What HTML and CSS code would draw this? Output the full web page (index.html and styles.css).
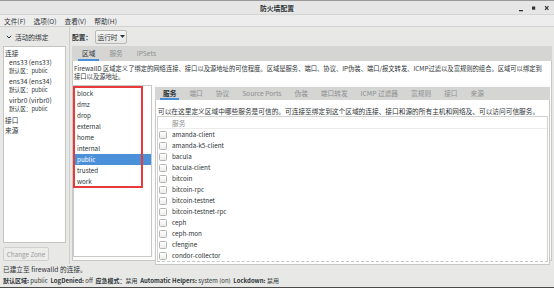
FILE: index.html
```html
<!DOCTYPE html>
<html lang="zh-CN">
<head>
<meta charset="utf-8">
<title>防火墙配置</title>
<link rel="stylesheet" href="styles.css">
</head>
<body>
<div class="window">
  <div class="titlebar">
    <span class="title">防火墙配置</span>
    <svg class="wbtns" width="40" height="10" viewBox="0 0 40 10">
      <rect x="8" y="7" width="4" height="1.3" fill="#2e3436"/>
      <rect x="21" y="3.5" width="3.2" height="3.2" fill="#2e3436"/>
      <path d="M34 3.2 L37.4 6.8 M37.4 3.2 L34 6.8" stroke="#2e3436" stroke-width="1.2"/>
    </svg>
  </div>
  <div class="menubar">
    <span>文件(F)</span><span>选项(O)</span><span>查看(V)</span><span>帮助(H)</span>
  </div>
  <div class="main">
    <div class="leftcol">
      <div class="lhead"><svg width="6" height="4" viewBox="0 0 6 4"><path d="M0.8 0.8 L3 3 L5.2 0.8" stroke="#2e3436" stroke-width="1" fill="none"/></svg><span>活动的绑定</span></div>
      <div class="lbox">
        <div class="sect">连接</div>
        <div class="conn"><div class="cname">ens33 (ens33)</div><div class="csub">默认区：public</div></div>
        <div class="conn"><div class="cname">ens34 (ens34)</div><div class="csub">默认区：public</div></div>
        <div class="conn"><div class="cname">virbr0 (virbr0)</div><div class="csub">默认区：public</div></div>
        <div class="sect">接口</div>
        <div class="sect">来源</div>
      </div>
      <div class="czbtn">Change Zone</div>
    </div>
    <div class="vsep"></div>
    <div class="rightcol">
      <div class="cfgrow"><span class="cfglabel">配置：</span><span class="dropdown">运行时<svg width="5" height="3" viewBox="0 0 5 3"><path d="M0 0 H5 L2.5 3 Z" fill="#2e3436"/></svg></span></div>
      <div class="nb">
        <div class="tabs outer-tabs">
          <span class="tab active">区域</span><span class="tab">服务</span><span class="tab">IPSets</span>
        </div>
        <div class="page">
          <div class="desc">FirewallD 区域定义了绑定的网络连接、接口以及源地址的可信程度。区域是服务、端口、协议、IP伪装、端口/报文转发、ICMP过滤以及富规则的组合。区域可以绑定到<br>接口以及源地址。</div>
          <div class="zonerow">
            <div class="zonelist">
              <div class="zone">block</div>
              <div class="zone">dmz</div>
              <div class="zone">drop</div>
              <div class="zone">external</div>
              <div class="zone">home</div>
              <div class="zone">internal</div>
              <div class="zone selected">public</div>
              <div class="zone">trusted</div>
              <div class="zone">work</div>
              <div class="annot"></div>
            </div>
            <div class="inb">
              <div class="tabs inner-tabs">
                <span class="tab active">服务</span><span class="tab">端口</span><span class="tab">协议</span><span class="tab">Source Ports</span><span class="tab">伪装</span><span class="tab">端口转发</span><span class="tab">ICMP 过滤器</span><span class="tab">富规则</span><span class="tab">接口</span><span class="tab">来源</span>
              </div>
              <div class="ipage">
                <div class="idesc">可以在这里定义区域中哪些服务是可信的。可连接至绑定到这个区域的连接、接口和源的所有主机和网络及、可以访问可信服务。</div>
                <div class="table">
                  <div class="thead">服务</div>
                  <div class="tbody">
                    <div class="row"><span class="cb"></span>amanda-client</div>
                    <div class="row"><span class="cb"></span>amanda-k5-client</div>
                    <div class="row"><span class="cb"></span>bacula</div>
                    <div class="row"><span class="cb"></span>bacula-client</div>
                    <div class="row"><span class="cb"></span>bitcoin</div>
                    <div class="row"><span class="cb"></span>bitcoin-rpc</div>
                    <div class="row"><span class="cb"></span>bitcoin-testnet</div>
                    <div class="row"><span class="cb"></span>bitcoin-testnet-rpc</div>
                    <div class="row"><span class="cb"></span>ceph</div>
                    <div class="row"><span class="cb"></span>ceph-mon</div>
                    <div class="row"><span class="cb"></span>cfengine</div>
                    <div class="row"><span class="cb"></span>condor-collector</div>
                  </div>
                </div>
              </div>
            </div>
          </div>
        </div>
      </div>
    </div>
  </div>
  <div class="status">
    <div class="sline">已建立至 firewalld 的连接。</div>
    <div class="sline small"><b>默认区域:</b> public&nbsp; <b>LogDenied:</b> off&nbsp; <b>应急模式：</b>禁用&nbsp; <b>Automatic Helpers:</b> system (on)&nbsp; <b>Lockdown:</b> 禁用</div>
  </div>
</div>
</body>
</html>
```
FILE: styles.css
```css
* { box-sizing: border-box; }
html, body { margin: 0; padding: 0; }
body {
  width: 554px;
  height: 288px;
  overflow: hidden;
  background: #e8e8e7;
  font-family: "Noto Sans CJK SC", "Noto Sans", sans-serif;
  font-size: 6.7px;
  color: #2e3436;
}
.window {
  width: 554px;
  height: 288px;
  border-top: 1px solid #9a9a9a;
  border-bottom: 1px solid #4a4a4a;
  display: flex;
  flex-direction: column;
  background: #e8e8e7;
}
.titlebar {
  position: relative;
  height: 14px;
  display: flex;
  align-items: center;
  justify-content: center;
  background: #e6e6e6;
  border-bottom: 1px solid #d4d4d4;
}
.title { font-weight: bold; font-size: 6.8px; }
.wbtns { position: absolute; right: 3px; top: 2px; }
.menubar {
  height: 12px;
  display: flex;
  align-items: center;
  gap: 8px;
  padding-left: 4px;
  background: #ededed;
  border-bottom: 1px solid #d2d2d2;
}
.main {
  height: 237px;
  display: flex;
}
.leftcol {
  width: 69px;
  display: flex;
  flex-direction: column;
}
.lhead {
  height: 19px;
  display: flex;
  align-items: center;
  gap: 3px;
  padding-left: 6px;
}
.lbox {
  margin-left: 3px;
  width: 63px;
  height: 197px;
  background: #fff;
  border: 1px solid #c4c4c2;
  padding-top: 1px;
  padding-left: 1px;
}
.sect { line-height: 10px; }
.conn { padding-left: 4px; margin-bottom: 2px; }
.cname { line-height: 8.5px; }
.csub { line-height: 8.5px; font-size: 5.6px; }
.czbtn {
  margin: 4px 0 0 3px;
  width: 46px;
  height: 14px;
  border: 1px solid #cfcfcd;
  border-radius: 2px;
  background: #ececeb;
  color: #9a9c9c;
  display: flex;
  align-items: center;
  justify-content: center;
  font-size: 6.3px;
}
.vsep { width: 1px; background: #cfcfcd; }
.rightcol { flex: 1; display: flex; flex-direction: column; }
.cfgrow {
  height: 19px;
  display: flex;
  align-items: center;
  padding-left: 2px;
}
.cfglabel { font-weight: bold; width: 23px; }
.dropdown {
  height: 14px;
  width: 32px;
  border: 1px solid #b9b9b7;
  border-radius: 2px;
  background: linear-gradient(#f6f6f6, #e6e6e5);
  display: flex;
  align-items: center;
  justify-content: center;
  gap: 2px;
}
.nb {
  margin-left: 2px;
  width: 480px;
  height: 215px;
  display: flex;
  flex-direction: column;
}
.tabs {
  display: flex;
  align-items: stretch;
  background: #d5d5d4;
  color: #8d8f8f;
}
.tab {
  display: flex;
  align-items: center;
  border-bottom: 2px solid transparent;
}
.tab.active { color: #2e3436; border-bottom-color: #4a90d9; }
.outer-tabs { height: 15px; padding-left: 6px; gap: 6px; }
.outer-tabs .tab { padding: 0 4px; padding-top: 1px; }
.page {
  flex: 1;
  background: #fbfbfb;
  border: 1px solid #c8c8c6;
  border-top: none;
}
.desc {
  font-size: 6.3px;
  line-height: 8px;
  padding: 4px 0 0 1px;
  height: 24px;
  white-space: nowrap;
  background: #fff;
}
.zonerow { display: flex; align-items: flex-start; }
.zonelist {
  position: relative;
  width: 79px;
  height: 172px;
  background: #fff;
  border: 1px solid #c8c8c6;
  padding-top: 2px;
}
.zone {
  line-height: 11px;
  padding-left: 3px;
  font-size: 6.3px;
}
.zone.selected { background: #4a90d9; color: #fff; }
.annot {
  position: absolute;
  left: -1px;
  top: 0px;
  width: 70px;
  height: 102px;
  border: 2px solid #e8393b;
}
.inb {
  margin: 2px 0 0 3px;
  width: 395px;
  height: 170px;
  display: flex;
  flex-direction: column;
}
.inner-tabs { height: 14px; padding-left: 5px; gap: 7px; }
.inner-tabs .tab { padding: 0 3px; padding-top: 1px; }
.inner-tabs .tab.active { font-weight: bold; }
.ipage {
  flex: 1;
  background: #fff;
  border: 1px solid #c8c8c6;
  border-top: none;
  padding: 0 1px 2px 1px;
  display: flex;
  flex-direction: column;
}
.idesc { line-height: 8px; padding: 7px 0 1px 1px; white-space: nowrap; }
.table {
  flex: 1;
  border: 1px solid #d0d0ce;
  border-bottom: 1px dashed #c4c4c2;
  display: flex;
  flex-direction: column;
  overflow: hidden;
}
.thead {
  height: 12px;
  line-height: 12px;
  padding-left: 14px;
  color: #8d8f8f;
  border-bottom: 1px solid #ececec;
  flex-shrink: 0;
}
.tbody { flex: 1; overflow: hidden; }
.row {
  height: 11px;
  display: flex;
  align-items: center;
  font-size: 6.3px;
  padding-left: 1px;
}
.cb {
  width: 8px;
  height: 8px;
  border: 1px solid #b3b3b1;
  border-radius: 1.5px;
  background: linear-gradient(#ffffff, #ececeb);
  margin-right: 5px;
}
.status { flex: 1; padding-left: 3px; padding-top: 0; }
.sline { line-height: 11px; white-space: nowrap; }
.sline.small { font-size: 6px; }
.sline b { font-weight: bold; }
```
